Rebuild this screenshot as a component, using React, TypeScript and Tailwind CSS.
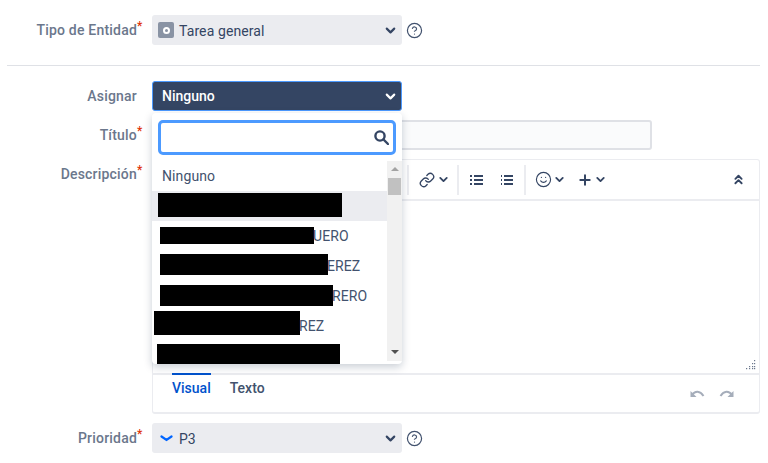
import React from "react";
import { ChevronDown, ChevronsUp, CircleHelp, Link, Plus, Smile } from "lucide-react";

const FONT = { fontFamily: 'Roboto, "Noto Sans", sans-serif' };

const Label = ({ text, star }: { text: string; star?: boolean }) => (
  <div className="flex w-[152px] shrink-0 text-[14px] font-medium tracking-[0.2px] text-[#6b778c]">
    <span className="w-[137px] text-right">{text}</span>
    {star && <span className="mt-[3px] text-[12px] leading-[16px] text-[#de350b]">*</span>}
  </div>
);

const Caret = ({ className = "text-[#253858]" }: { className?: string }) => (
  <ChevronDown size={15} strokeWidth={3.4} className={className} />
);

const ToolCaret = () => <ChevronDown size={13} strokeWidth={3.4} className="text-[#344563]" />;

const Help = () => <CircleHelp size={17} strokeWidth={1.7} className="ml-[4px] text-[#42526e]" />;

// filas del desplegable, los nombres están tapados en la captura
const rows = [
  { bar: "ml-[6px] mt-[2px] w-[184px] h-[24px]", text: "", active: true },
  { bar: "ml-[8px] mt-[6px] w-[154px] h-[17px]", text: "UERO" },
  { bar: "ml-[8px] mt-[3px] w-[168px] h-[21px]", text: "EREZ" },
  { bar: "ml-[8px] mt-[4px] w-[173px] h-[21px]", text: "RERO" },
  { bar: "ml-[2px] mt-[0px] w-[146px] h-[24px]", text: "REZ" },
  { bar: "ml-[5px] mt-[3px] w-[183px] h-[24px]", text: "" },
];

const SearchIcon = () => (
  <svg width="15" height="15" viewBox="0 0 15 15" fill="none" stroke="#344563" strokeWidth="2.4">
    <circle cx="6" cy="6" r="4.6" />
    <path d="M9.5 9.5 L14 14" strokeLinecap="round" />
  </svg>
);

const Dropdown = () => (
  <div className="absolute left-0 top-[32px] z-10 h-[251px] w-[250px] overflow-hidden rounded-[4px] bg-white shadow-[0_3px_8px_rgba(9,30,66,0.22)]">
    <div className="px-[6px] pt-[7px]">
      <div className="flex h-[35px] items-center justify-end rounded-[5px] border-[3px] border-[#4c9aff] bg-white pr-[4px]">
        <SearchIcon />
      </div>
    </div>
    <div className="mt-[6px] flex h-[200px]">
      <div className="w-[235px] text-[14px] tracking-[0.1px] text-[#42526e]">
        <div className="h-[30px] px-[10px] leading-[31px]">Ninguno</div>
        {rows.map((r, i) => (
          <div key={i} className={`flex h-[30px] items-start leading-[31px] ${r.active ? "bg-[#ebecf0]" : ""}`}>
            <span className={`shrink-0 bg-black ${r.bar}`} />
            <span className="-ml-[1px]">{r.text}</span>
          </div>
        ))}
      </div>
      <div className="flex w-[15px] flex-col items-center bg-[#f1f1f1] pt-[6px]">
        <div className="h-0 w-0 border-x-[4px] border-b-[4px] border-x-transparent border-b-[#a3a3a3]" />
        <div className="mt-[7px] h-[17px] w-[13px] bg-[#c1c1c1]" />
        <div className="mb-[7px] mt-auto h-0 w-0 border-x-[4px] border-t-[4px] border-x-transparent border-t-[#505050]" />
      </div>
    </div>
  </div>
);

const Sep = () => <div className="h-[30px] w-[2px] bg-[#ebecf0]" />;

const ListIcon = ({ numbered }: { numbered?: boolean }) => (
  <svg width="13" height="12" viewBox="0 0 13 12" className="text-[#344563]">
    {[1, 5, 9].map((y) => (
      <g key={y} fill="currentColor">
        <rect x={numbered ? 1 : 0} y={y} width={numbered ? 1 : 2} height="2" />
        <rect x="4" y={y} width="9" height="2" />
      </g>
    ))}
  </svg>
);

const UndoIcon = ({ flip }: { flip?: boolean }) => (
  <svg width="15" height="10" viewBox="0 0 15 10" fill="none" className={flip ? "-scale-x-100" : ""}>
    <path d="M2 7 C5 2.5 10 2.5 13.5 8" stroke="#a5adba" strokeWidth="2" />
    <path d="M0.5 3 V9 H6.5 Z" fill="#a5adba" />
  </svg>
);

const Toolbar = () => (
  <div className="flex h-[41px] items-center border-b-2 border-[#ebecf0] pl-[254px] pr-[13px] text-[#344563]">
    <Sep />
    <div className="ml-[10px] flex w-[38px] items-center">
      <Link size={16} strokeWidth={2} />
      <span className="ml-[2px]"><ToolCaret /></span>
    </div>
    <Sep />
    <div className="ml-[11px] flex w-[54px] items-center gap-[17px]">
      <ListIcon />
      <ListIcon numbered />
    </div>
    <Sep />
    <div className="ml-[9px] flex items-center">
      <Smile size={17} strokeWidth={1.6} />
      <span className="ml-[1px]"><ToolCaret /></span>
      <Plus size={16} strokeWidth={3} className="ml-[11px]" />
      <span className="ml-[1px]"><ToolCaret /></span>
    </div>
    <ChevronsUp size={15} strokeWidth={3} className="ml-auto" />
  </div>
);

const Editor = () => (
  <div className="flex h-[255px] flex-1 flex-col rounded-[3px] border border-b-2 border-[#ebecf0]">
    <Toolbar />
    <div className="flex h-[172px] items-end justify-end p-[3px]">
      <svg width="10" height="10" viewBox="0 0 10 10" fill="#6b778c">
        {[[8, 0], [6, 3], [8, 3], [3, 6], [6, 6], [8, 6], [0, 8], [3, 8], [6, 8], [8, 8]].map(([x, y], i) => (
          <rect key={i} x={x} y={y} width="1.2" height="1.2" />
        ))}
      </svg>
    </div>
    <div className="flex flex-1 border-t-2 border-[#ebecf0] pl-[19px] pr-[25px] text-[14px] font-medium">
      <div className="-mt-[2px] h-[20px] border-t-2 border-[#0052cc] pt-[3px] leading-[20px] text-[#0052cc]">Visual</div>
      <div className="ml-[19px] pt-[3px] leading-[20px] text-[#42526e]">Texto</div>
      <div className="ml-auto flex items-start gap-[14px] pt-[13px]">
        <UndoIcon />
        <UndoIcon flip />
      </div>
    </div>
  </div>
);

const App: React.FC = () => {
  return (
    <div className="h-[463px] w-[768px] overflow-hidden bg-white pt-[15px]" style={FONT}>
      <div className="flex items-center leading-[30px]">
        <Label text="Tipo de Entidad" star />
        <div className="flex h-[30px] w-[250px] items-center rounded-[3px] bg-[#ebecf0] pl-[6px] pr-[4px] text-[14px] tracking-[0.1px] text-[#344563]">
          <span className="flex h-[16px] w-[16px] items-center justify-center rounded-[2px] bg-[#8993a4]">
            <span className="h-[7px] w-[7px] rounded-full border-[2px] border-white" />
          </span>
          <span className="ml-[5px] pt-[1px]">Tarea general</span>
          <Caret className="ml-auto" />
        </div>
        <Help />
      </div>

      <div className="mx-[7px] mt-[20px] h-[1px] w-[753px] bg-[#dfe1e6]" />

      <div className="mt-[15px] flex items-center leading-[30px]">
        <Label text="Asignar" />
        <div className="relative w-[250px]">
          <div className="flex h-[30px] items-center rounded-[3px] border border-[#4c9aff] bg-[#344563] pl-[9px] pr-[3px] text-[14px] font-medium text-white">
            Ninguno
            <Caret className="ml-auto text-white" />
          </div>
          <Dropdown />
        </div>
      </div>

      <div className="mt-[9px] flex items-center leading-[30px]">
        <Label text="Título" star />
        <div className="h-[30px] w-[500px] rounded-[3px] border-2 border-[#dfe1e6] bg-[#fafbfc]" />
      </div>

      <div className="mt-[9px] flex items-start pr-[8px] leading-[30px]">
        <Label text="Descripción" star />
        <Editor />
      </div>

      <div className="mt-[9px] flex items-center leading-[30px]">
        <Label text="Prioridad" star />
        <div className="flex h-[30px] w-[250px] items-center rounded-[3px] bg-[#ebecf0] pl-[8px] pr-[4px] text-[14px] text-[#344563]">
          <svg width="13" height="7" viewBox="0 0 13 7" fill="none" stroke="#0065ff" strokeWidth="2.2" strokeLinecap="round">
            <path d="M1.5 1.5 L6.5 5 L11.5 1.5" />
          </svg>
          <span className="ml-[6px] pt-[1px]">P3</span>
          <Caret className="ml-auto" />
        </div>
        <Help />
      </div>
    </div>
  );
};

export default App;
